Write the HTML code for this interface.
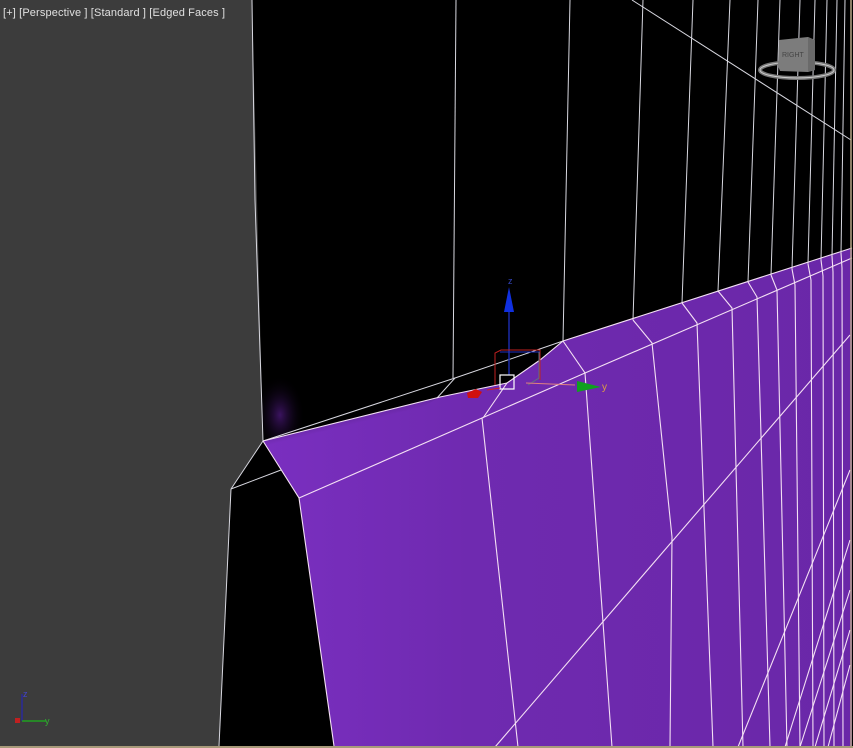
<!DOCTYPE html>
<html><head><meta charset="utf-8"><style>
html,body{margin:0;padding:0;background:#000;}
svg{display:block}
</style></head><body>
<svg width="853" height="748" viewBox="0 0 853 748" xmlns="http://www.w3.org/2000/svg">
<defs>
<linearGradient id="pg" x1="0" y1="0" x2="1" y2="0">
<stop offset="0" stop-color="#7a2fc0"/><stop offset="0.35" stop-color="#6f2ab0"/><stop offset="1" stop-color="#6a27a8"/>
</linearGradient>
<radialGradient id="glow" cx="0.5" cy="0.5" r="0.5">
<stop offset="0" stop-color="#4a1878" stop-opacity="0.8"/><stop offset="1" stop-color="#000" stop-opacity="0"/>
</radialGradient>
<linearGradient id="dk" x1="0" y1="0" x2="0.6" y2="1">
<stop offset="0" stop-color="#000" stop-opacity="0.75"/><stop offset="0.5" stop-color="#000" stop-opacity="0"/>
</linearGradient>
</defs>
<rect width="853" height="748" fill="#000"/>
<ellipse cx="280" cy="415" rx="25" ry="40" fill="url(#glow)"/>
<polygon points="0,0 252,0 263,441 231,489 219,746 0,746" fill="#3c3c3c"/>
<polygon points="263,441 440,397 507,383 540,360 563,341 852,248 852,746 334,746 299,498" fill="url(#pg)"/>
<polygon points="263,441 440,397 400,420 299,470 285,470" fill="url(#dk)"/>
<g stroke="#d8d8e0" stroke-width="1" fill="none">
<path d="M252,0 L255,200 L263,441"/>
<path d="M456,0 L453,378"/>
<path d="M570,0 L563,341"/>
<path d="M643,0 L633,320"/>
<path d="M693,0 L682,303"/>
<path d="M730,0 L718,291"/>
<path d="M758,0 L748,282"/>
<path d="M780,0 L771,275"/>
<path d="M800,0 L792,269"/>
<path d="M815,0 L808,264"/>
<path d="M827,0 L821,260"/>
<path d="M837,0 L832,256"/>
<path d="M845,0 L841,253"/>
<path d="M632,0 L851,140"/>
<path d="M263,441 L455,378 L563,341"/>
<path d="M455,378 L437,398"/>
<path d="M263,441 L231,489"/>
<path d="M231,489 L281,470"/>
<path d="M231,489 L219,746"/>
</g>
<g stroke="#f4e0f4" stroke-width="1.1" fill="none">
<path d="M263,441 L440,397 L507,383 L540,360 L563,341 L852,248"/>
<path d="M263,441 L299,498 L334,746"/>
<path d="M299,498 L482,418 L585,373 L852,258"/>
<path d="M482,418 L518,747"/>
<path d="M563,341 L585,373 L612,747"/>
<path d="M633,320 L652,343 L672,537 L670,747"/>
<path d="M682,303 L697,323 L713,747"/>
<path d="M718,291 L732,308 L743,747"/>
<path d="M748,282 L757,297 L770,747"/>
<path d="M771,275 L777,290 L787,747"/>
<path d="M792,269 L795,285 L800,747"/>
<path d="M808,264 L811,280 L813,747"/>
<path d="M821,260 L823,276 L824,747"/>
<path d="M832,256 L833,272 L834,747"/>
<path d="M841,253 L842,268 L843,747"/>
<path d="M850,335 L495,747"/>
<path d="M850,470 L738,747"/>
<path d="M850,540 L785,747"/>
<path d="M850,590 L800,747"/>
<path d="M850,630 L815,747"/>
<path d="M850,665 L828,747"/>
<path d="M507,383 L483,418"/>
</g>
<line x1="851" y1="0" x2="851" y2="748" stroke="#b8a888" stroke-width="1.5"/>
<rect x="0" y="746" width="853" height="2" fill="#a89a7a"/>
<g>
<line x1="509" y1="300" x2="509" y2="375" stroke="#1b2aa8" stroke-width="1.5"/>
<polygon points="509,287 504,312 514,312" fill="#1030e0"/>
<text x="508" y="284" font-family="Liberation Sans, sans-serif" font-size="9" fill="#3344bb">z</text>
<path d="M495,385 L495,353 L501,350 L540,350 L540,380" stroke="#c02020" fill="none" stroke-width="1"/>
<path d="M500,352 L540,352" stroke="#2030c0" stroke-width="1"/>
<path d="M539,352 L539,378 L528,385" stroke="#607080" fill="none"/>
<rect x="500" y="375" width="14" height="14" fill="none" stroke="#fff" stroke-width="1.2"/>
<polygon points="467,393 476,389 482,392 478,398 468,398" fill="#d01010"/>
<path d="M487,390 L500,388" stroke="#d02020"/>
<path d="M526,383 L575,385" stroke="#e08080" stroke-width="1"/>
<polygon points="577,381 577,392 601,387" fill="#10a020"/>
<text x="602" y="390" font-family="Liberation Sans, sans-serif" font-size="10" fill="#e0a040">y</text>
</g>
<ellipse cx="797" cy="70" rx="37" ry="8" fill="none" stroke="#777" stroke-width="4"/>
<ellipse cx="797" cy="70" rx="37" ry="8" fill="none" stroke="#ccc" stroke-width="1"/>
<polygon points="779,40 808,37 815,40 815,70 808,72 780,71 778,66" fill="#7c7c7c"/>
<polygon points="808,37 815,40 815,70 808,72" fill="#6a6a6a"/>
<text x="782" y="57" font-family="Liberation Sans, sans-serif" font-size="7" fill="#444">RIGHT</text>
<text x="3" y="16" font-family="Liberation Sans, sans-serif" font-size="11" fill="#e0e0e0" textLength="222" lengthAdjust="spacing" xml:space="preserve">[+] [Perspective ] [Standard ] [Edged Faces ]</text>
<line x1="22" y1="694" x2="22" y2="721" stroke="#2a2a9a" stroke-width="1.5"/>
<line x1="22" y1="721" x2="46" y2="721" stroke="#20a020" stroke-width="1.5"/>
<text x="23" y="697" font-family="Liberation Sans, sans-serif" font-size="9" fill="#4444cc">z</text>
<text x="45" y="724" font-family="Liberation Sans, sans-serif" font-size="9" fill="#30b030">y</text>
<rect x="15" y="718" width="5" height="5" fill="#c02020"/>
</svg>
</body></html>
